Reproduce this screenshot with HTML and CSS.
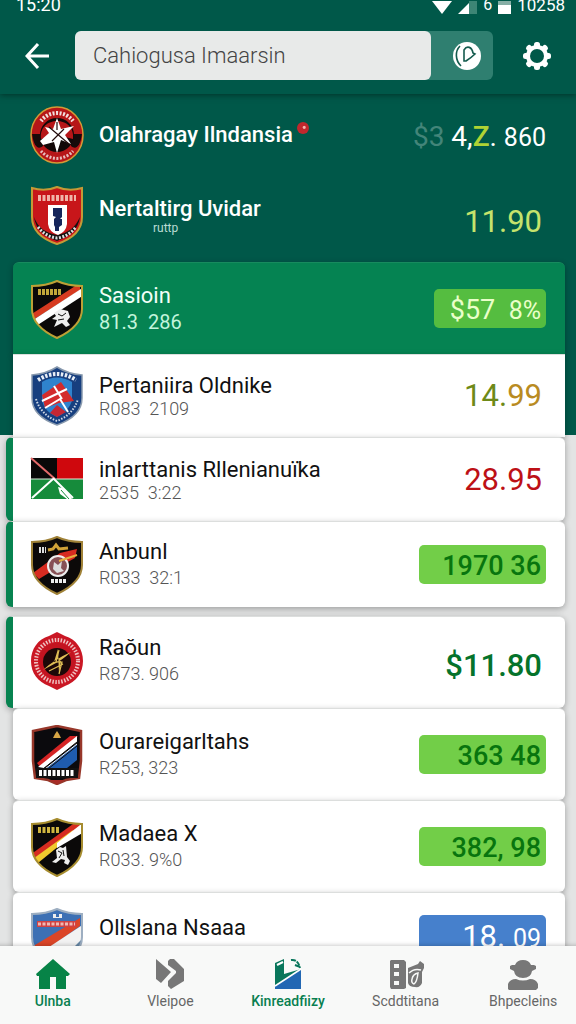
FILE: index.html
```html
<!DOCTYPE html>
<html lang="id">
<head>
<meta charset="utf-8">
<meta name="viewport" content="width=device-width, initial-scale=1">
<title>Olahraga</title>
<link rel="stylesheet" href="styles.css">
</head>
<body>
<div class="app">
  <header class="top">
    <div class="status">
      <span class="clock">15:20</span>
      <span class="status-right">
        <svg width="20" height="13" viewBox="0 0 20 13"><path d="M0 0h20L10 13z" fill="#fff"/></svg>
        <svg width="19" height="13" viewBox="0 0 19 13"><path d="M0 13L11 2v11z" fill="#fff"/><path d="M11 0h8v13h-8z" fill="#3d8575"/></svg>
        <span class="sim">6</span>
        <svg width="13" height="13" viewBox="0 0 13 13"><path d="M0 0h13v13H0z" fill="#fff"/><path d="M0 0h13v4H0z" fill="#86aea5"/></svg>
        <span class="level">10258</span>
      </span>
    </div>
    <div class="bar">
      <button class="icon-btn back" aria-label="Back">
        <svg width="24" height="28" viewBox="0 0 24 28" fill="none" stroke="#fff" stroke-width="3"><path d="M13 2L2 14l11 12M2 14h22"/></svg>
      </button>
      <form class="search">
        <input class="search-input" type="text" aria-label="Search" value="Cahiogusa Imaarsin">
        <button class="search-btn" type="button" aria-label="Go">
          <svg width="30" height="30" viewBox="0 0 30 30"><circle cx="15" cy="15" r="14" fill="#fff"/><path d="M8 5C3 10 3 19 9 25" fill="none" stroke="#145b4e" stroke-width="1.600"/><path d="M12 20V9c3-5 8-3 9 3l2 1c-3 3-6 5-9 7z" fill="none" stroke="#145b4e" stroke-width="1.600"/></svg>
        </button>
      </form>
      <button class="icon-btn gear" aria-label="Settings">
        <svg width="28" height="30" viewBox="0 0 28 30"><g fill="#fff"><circle cx="14" cy="15" r="11"/><rect x="11" y="1" width="6" height="28" rx="2.500"/><rect x="11" y="1" width="6" height="28" rx="2.500" transform="rotate(45 14 15)"/><rect x="11" y="1" width="6" height="28" rx="2.500" transform="rotate(90 14 15)"/><rect x="11" y="1" width="6" height="28" rx="2.500" transform="rotate(135 14 15)"/></g><circle cx="14" cy="15" r="7" fill="#005849"/></svg>
      </button>
    </div>
  </header>

  <main class="content">
    <ul class="intro">
      <li class="row plain">
        <svg class="crest" viewBox="0 0 54 60">
          <ellipse cx="27" cy="30" rx="26" ry="28" fill="#b61618" stroke="#d49a35" stroke-width="1.500"/>
          <path d="M2 29h11v12c-5 4-9 1-11-12zM52 29H41v12c5 4 9 1 11-12z" fill="#160a0a"/>
          <path d="M11 16a20 20 0 0 1 32 0" fill="none" stroke="#f2dede" stroke-width="4" stroke-dasharray="2 1.500"/>
          <path d="M11 46a21 21 0 0 0 32 0" fill="none" stroke="#e7bcbc" stroke-width="3" stroke-dasharray="2 1.500"/>
          <circle cx="27" cy="30" r="17" fill="#120808"/><path d="M11 34c-3-24 35-24 32 0L27 30z" fill="#b61618"/>
          <path d="M27 13l4 11 13-3-9 9 6 9-10-4-4 13-3-11-11 3-3-4 9-8-4-6 8 2z" fill="#fff"/>
          <path d="M19 22l20 17M34 24L22 36M27 17v8" stroke="#230b0b" stroke-width="1.200"/>
        </svg>
        <div class="text"><span class="name">Olahragay Ilndansia<i class="dot"></i></span></div>
        <span class="price total"><span class="faded">$3</span> 4,<b class="lime">Z</b>. <small>860</small></span>
      </li>
      <li class="row plain">
        <svg class="crest" viewBox="0 0 54 60">
          <path d="M2 3q13 4 25-1 12 5 25 1v29c0 14-10 22-25 27C12 54 2 46 2 32z" fill="#c8161a" stroke="#c49a36" stroke-width="2"/>
          <path d="M4 32c2 13 10 19 23 24 13-5 21-11 23-24-5 11-12 16-23 18C16 48 8 43 4 32z" fill="#161111"/>
          <path d="M8 13h38" stroke="#f0b5a9" stroke-width="6" stroke-dasharray="3 1.500"/>
          <path d="M8 42q8 10 19 11 11-1 19-11" fill="none" stroke="#ddd" stroke-width="3" stroke-dasharray="2 1.500"/>
          <path d="M18 20h19v19q-1 8-9 11-9-3-10-11z" fill="#fff"/>
          <path d="M23 23h9v9l-2 2h2v6l-3 2v4h-4v-4l-1-2v-6l2-2-3-1z" fill="#15255b"/>
        </svg>
        <div class="text"><span class="name">Nertaltirg Uvidar</span><span class="tiny">ruttp</span></div>
        <span class="price yellow">11.90</span>
      </li>
    </ul>

    <ul class="card">
      <li class="row active">
        <svg class="crest" viewBox="0 0 54 60">
          <defs><clipPath id="shield"><path d="M2 7q14 0 25-5 11 5 25 5v23c0 13-10 22-25 29C12 52 2 43 2 30z"/></clipPath></defs>
          <g clip-path="url(#shield)"><path d="M0 0h54v60H0z" fill="#0b0909"/><path d="M0 36L50 4v7L0 43z" fill="#d63a20"/><path d="M0 43L54 8v8L3 49z" fill="#fff"/></g>
          <path d="M2 7q14 0 25-5 11 5 25 5v23c0 13-10 22-25 29C12 52 2 43 2 30z" fill="none" stroke="#bda035" stroke-width="2"/>
          <path d="M8 13h23" stroke="#c2a63a" stroke-width="6" stroke-dasharray="3 1"/>
          <path d="M24 34l6-4 8 2 2 6-3 4 3 4-4 2-4-4-8 4 3-7-5-1 4-3z" fill="#eee"/><path d="M28 35l4 2 4-3M28 41l6-1" stroke="#111" fill="none"/>
        </svg>
        <div class="text"><span class="name">Sasioin</span><span class="code">81.3&nbsp; 286</span></div>
        <span class="price pill pale">$57&nbsp; <small>8%</small></span>
      </li>
      <li class="row snug">
        <svg class="crest" viewBox="0 0 54 60">
          <path d="M2 9q14-1 25-8 11 7 25 8v23c0 13-11 22-25 27C13 54 2 45 2 32z" fill="#173f7f" stroke="#8798ad" stroke-width="1.500"/>
          <path d="M12 16q15-9 30 0v19q-4 11-15 16-12-5-15-16z" fill="#2f83cd"/>
          <path d="M12 29l19-13 13 19-15 2-14 5z" fill="#d32b2c"/><path d="M12 35l25-12M24 20l8 13M15 42l15-9 8 13" stroke="#fff" stroke-width="2" fill="none"/><path d="M20 47l7-8 9 7-9 5z" fill="#c52734"/>
          <path d="M8 14q19-12 38 0" stroke="#e8eef6" stroke-width="4" stroke-dasharray="2.500 1.500" fill="none"/>
          <path d="M6 33q5 16 21 22 16-6 21-22" stroke="#d0d9e6" stroke-width="2" stroke-dasharray="1.500 1.500" fill="none"/>
        </svg>
        <div class="text"><span class="name">Pertaniira Oldnike</span><span class="code">R083&nbsp; 2109</span></div>
        <span class="price olive">14.<span class="amber">99</span></span>
      </li>
      <li class="row snug marked">
        <svg class="crest" viewBox="0 0 54 60">
          <path d="M1 8h26v21H1z" fill="#090808"/><path d="M27 8h26v21H27z" fill="#cf080d"/><path d="M1 29h52v20H1z" fill="#168b3b"/>
          <path d="M1 29h52" stroke="#dcecdf"/><path d="M1 8l24 21" stroke="#e46b6b" stroke-width="2"/><path d="M2 48l21-19M23 28l20 20" stroke="#fff" stroke-width="2"/><path d="M28 37l4 1 7 6 3 5h-5l-7-5z" fill="#fff"/><path d="M31 40l8 9" stroke="#168b3b"/>
        </svg>
        <div class="text"><span class="name">inlarttanis Rllenianuïka</span><span class="code">2535&nbsp; 3:22</span></div>
        <span class="price red">28.95</span>
      </li>
      <li class="row marked">
        <svg class="crest" viewBox="0 0 54 60">
          <g clip-path="url(#shield)"><path d="M0 0h54v60H0z" fill="#0c0909"/><path d="M3 38L30 18l17-4-2 9-18 10L9 44z" fill="#d72b21"/></g>
          <path d="M2 7q14 0 25-5 11 5 25 5v23c0 13-10 22-25 29C12 52 2 43 2 30z" fill="none" stroke="#a08237" stroke-width="2"/>
          <circle cx="28" cy="31" r="10" fill="#875055" stroke="#eee" stroke-width="2"/><path d="M24 27l4 3 4-4-1 7 3 3-7 2-4-4z" fill="#ddd"/><path d="M29 26l18-6" stroke="#e6ae3f" stroke-width="2"/>
          <path d="M9 15h7" stroke="#ddd" stroke-width="6" stroke-dasharray="2 1"/><path d="M18 15l5-1 3-4 3 4 9-1" stroke="#d0a138" stroke-width="3" fill="none"/><path d="M21 46h15" stroke="#eee" stroke-width="4" stroke-dasharray="3 1"/>
        </svg>
        <div class="text"><span class="name">Anbunl</span><span class="code">R033&nbsp; 32:1</span></div>
        <span class="price pill wide">1970 36</span>
      </li>
    </ul>

    <ul class="card">
      <li class="row marked lead">
        <svg class="crest" viewBox="0 0 54 60">
          <path d="M27 1l8 4c11 3 18 13 18 25S46 51 35 55l-8 4-8-4C8 51 1 42 1 30S8 8 19 5z" fill="#ca1724"/>
          <circle cx="27" cy="30" r="21" fill="none" stroke="#efc2c2" stroke-width="4" stroke-dasharray="1.500 1.500"/>
          <circle cx="27" cy="30" r="18" fill="#c31420"/><circle cx="27" cy="31" r="14" fill="#1c0808"/>
          <path d="M13 39q12-11 28-18-9 8-15 11zM28 18l-4 13 7-1-2 13" fill="#dfbd55"/><path d="M29 19l-3 12h6l-3 12M19 40l14-7" fill="none" stroke="#dfbd55" stroke-width="1.200"/>
        </svg>
        <div class="text"><span class="name">Raŏun</span><span class="code">R873. 906</span></div>
        <span class="price green">$11.80</span>
      </li>
      <li class="row">
        <svg class="crest" viewBox="0 0 54 60">
          <path d="M3 6l24-5 24 5v30l-2 17-13 2-9 4-9-4-13-2-2-17z" fill="#0b0a0d" stroke="#97372a" stroke-width="2.500"/>
          <path d="M7 38L40 11h8L10 42z" fill="#d42424"/><path d="M8 42L47 11v6L14 43z" fill="#fff"/><path d="M17 43L47 19v16l-10 8z" fill="#1f5cae"/><path d="M13 44L47 17M18 44L47 21" stroke="#111"/><path d="M15 44L47 19" stroke="#fff"/>
          <path d="M23 13l2-4 2-3 2 3 2 4z" fill="#d6a545"/><path d="M6 43h42v10H6z" fill="#111"/><path d="M9 48h36" stroke="#fff" stroke-width="6" stroke-dasharray="3 1.500"/><path d="M19 55h16l-8 4z" fill="#a92c27"/>
        </svg>
        <div class="text"><span class="name">Ourareigarltahs</span><span class="code">R253, 323</span></div>
        <span class="price pill wide">363 48</span>
      </li>
      <li class="row">
        <svg class="crest" viewBox="0 0 54 60">
          <g clip-path="url(#shield)"><path d="M0 0h54v60H0z" fill="#0b0909"/><path d="M0 38L50 2v9L0 44z" fill="#d62c20"/><path d="M0 44L43 13l-3 7L3 50z" fill="#f0c92e"/><path d="M27 26L54 5v10L27 31z" fill="#fff"/></g>
          <path d="M2 7q14 0 25-5 11 5 25 5v23c0 13-10 22-25 29C12 52 2 43 2 30z" fill="none" stroke="#a68c2f" stroke-width="2"/>
          <path d="M8 13h22" stroke="#d0b540" stroke-width="6" stroke-dasharray="3 1.500"/>
          <path d="M26 33l4-3 3 1 3-2 1 11 3 4-2 4-4-2 1-3-4-1-5 4-4-1 5-4z" fill="#eee"/><path d="M28 34l4 2-3 5M33 33l1 6" stroke="#111" fill="none"/>
        </svg>
        <div class="text"><span class="name">Madaea X</span><span class="code">R033. 9%0</span></div>
        <span class="price pill wide">382, 98</span>
      </li>
      <li class="row last">
        <svg class="crest" viewBox="0 0 54 60">
          <g clip-path="url(#shield)"><path d="M0 0h54v60H0z" fill="#3d70b4"/><path d="M0 41L50 11v8L6 50z" fill="#db4528"/><path d="M7 48L54 17v18L20 60z" fill="#f2f2f2"/><path d="M24 60L54 30v30z" fill="#6687a5"/></g>
          <path d="M2 7q14 0 25-5 11 5 25 5v23c0 13-10 22-25 29C12 52 2 43 2 30z" fill="none" stroke="#9daec1" stroke-width="2"/>
          <path d="M7 17h39" stroke="#d14242" stroke-width="6"/><path d="M8 17h37" stroke="#efb9b5" stroke-width="3" stroke-dasharray="3 1.500"/><path d="M23 11v-4h3v3h3v-3h3v4z" fill="#eee"/>
        </svg>
        <div class="text"><span class="name">Ollslana Nsaaa</span></div>
        <span class="price pill wide blue">18. <small>09</small></span>
      </li>
    </ul>
  </main>

  <nav class="tabs">
    <a class="tab on" href="#home">
      <svg width="36" height="32" viewBox="0 0 36 32"><path d="M18 1l17 15-2 2h-2v13H21V19h-6v12H4V18H2l-1-2z" fill="#078347"/></svg>
      <span>Ulnba</span>
    </a>
    <a class="tab" href="#next">
      <svg width="30" height="32" viewBox="0 0 30 32"><path d="M1 1l15 13L6 25l-5-4zM13 3l2-2h4l10 10v12l-13 8-3-3v-5l8-8v-2l-8-6z" fill="#777"/></svg>
      <span>Vleipoe</span>
    </a>
    <a class="tab on" href="#activity">
      <svg width="28" height="32" viewBox="0 0 28 32"><path d="M1 5l9-4v15l17-5v20H1z" fill="#08765b"/><path d="M1 31v-3L27 11v20z" fill="#2267b3"/><path d="M1 28L27 11" stroke="#fff" stroke-width="1.500"/><path d="M3 7l6-3" stroke="#fff" stroke-width="2"/><path d="M17 2q7-1 9 8M21 7l5 2" stroke="#08765b" stroke-width="2" stroke-dasharray="5 1" fill="none"/></svg>
      <span>Kinreadfiizy</span>
    </a>
    <a class="tab" href="#stats">
      <svg width="36" height="32" viewBox="0 0 36 32"><path d="M3 2h13l2 2v26l-2 1H3l-1-2V3z" fill="#777"/><path d="M6 6h5v4H6zM6 14h5v4H6zM6 23h5v4H6z" fill="#f8f9f8"/><path d="M20 10l10-4 2-3 4 3v4l-2 4v11q-2 5-7 4-6 0-7-4z" fill="#777"/><path d="M21 15q5-5 12-3M24 21q1-5 6-6-1 9-4 11-3-1-2-5z" stroke="#f8f9f8" stroke-width="1.500" fill="none"/></svg>
      <span>Scddtitana</span>
    </a>
    <a class="tab" href="#profile">
      <svg width="32" height="32" viewBox="0 0 32 32"><path d="M3 8l2-1h3q2-5 8-5t8 5h3l2 1v3l-4 2q-1 7-9 7t-9-7l-4-2zM1 31v-5q2-5 8-5 7 3 14 0 6 0 8 5v4l-2 2H2z" fill="#777"/></svg>
      <span>Bhpecleins</span>
    </a>
  </nav>
</div>
</body>
</html>
```
FILE: styles.css
```css
* { box-sizing: border-box; }
body { margin: 0; font-family: Roboto, "Liberation Sans", sans-serif; color: #111; }
ul { list-style: none; margin: 0; padding: 0; }
button { border: 0; padding: 0; background: none; }
svg { display: block; flex: none; }

.app { display: flex; flex-direction: column; height: 100vh; overflow: hidden; }

.top { flex: none; padding-bottom: 14px; background: #005849; box-shadow: 0 1px 6px rgba(0, 40, 32, .8); position: relative; color: #fff; }
.status { display: flex; justify-content: space-between; align-items: flex-end; height: 14px; padding: 0 11px 0 16px; overflow: hidden; font-size: 18px; line-height: 18px; }
.status-right { display: flex; align-items: flex-end; gap: 6px; height: 14px; }
.sim { font-size: 16px; }
.level { font-size: 17px; }
.bar { display: flex; align-items: center; padding: 17px 25px 0 25px; }
.back { width: 24px; margin-right: 26px; }
.search { display: flex; flex: 1; min-width: 0; height: 49px; border-radius: 6px; background: #2f7f70; }
.search-input { flex: 1; min-width: 0; border: 0; border-radius: 6px; padding: 0 18px; background: #e8eae9; color: #444; font: 300 22px Roboto, "Liberation Sans", sans-serif; }
.search-btn { display: flex; align-items: center; justify-content: center; width: 62px; padding-left: 10px; }
.gear { margin-left: 30px; }

.content { flex: 1; min-height: 0; overflow: hidden; padding: 1px 11px 0 13px; background: linear-gradient(#005849 341px, #e3e4e4 341px); }
.intro { padding-bottom: 7px; }
.row { display: flex; align-items: center; gap: 15px; padding: 0 19px 0 17px; }
.plain { height: 80px; color: #fff; }
.plain .name { font-weight: 500; }
.card { margin-bottom: 9px; }
.card .row { min-height: 92px; border-top: 1px solid #dcdedd; border-radius: 6px; background: #fff; box-shadow: 0 2px 6px rgba(0, 0, 0, .3); position: relative; }
.card .row + .row { min-height: 84px; }
.card .row + .row:last-child { min-height: 86px; }
.card + .card .row + .row { min-height: 92px; }
.card .active { background: #058352; border-color: #178b5e; border-radius: 6px 6px 0 0; color: #f2fff8; }
.card .active + .row { min-height: 83px; border-radius: 0; }
.card .marked { margin-left: -7px; border-left: 7px solid #078350; }
.card .lead { padding-bottom: 4px; }
.card .last { align-items: flex-start; padding-top: 14px; }
.last .name { padding-top: 8px; }
.last .pill { margin-top: 8px; }
.crest { width: 54px; height: 60px; }
.text { display: flex; flex-direction: column; flex: 1; min-width: 0; }
.name { font-size: 22px; line-height: 26px; white-space: nowrap; }
.code { font-size: 18px; line-height: 26px; font-weight: 300; color: #555; white-space: nowrap; }
.snug .code { line-height: 20px; }
.active .code { font-size: 20px; color: #c3f5dc; font-weight: 400; }
.tiny { margin-left: 54px; font-size: 12px; line-height: 12px; color: #b9dcd3; }
.dot { display: inline-block; width: 12px; height: 12px; margin-left: 4px; border-radius: 50%; background: radial-gradient(circle at 60% 45%, #f7b5b0 1px, #c1272d 2px); vertical-align: 8px; }

.price { flex: none; padding-right: 4px; font-size: 31px; line-height: 38px; text-align: right; white-space: nowrap; }
.price small { font-size: 25px; }
.total { padding: 4px 0 0; font-size: 28px; }
.faded { color: #438579; }
.lime { color: #b0d334; font-weight: 500; }
.yellow { padding-top: 14px; color: #c5e36c; }
.olive { color: #6e8a18; }
.amber { color: #b98b22; }
.red { color: #bd1016; }
.green { padding-top: 10px; color: #05732b; font-weight: 500; }
.pill { border-radius: 5px; padding: 4px 5px 0 11px; background: #72ce48; color: #08750e; font-size: 27px; line-height: 35px; font-weight: 500; }
.pale { min-width: 112px; background: #55bd40; color: #eaffc9; font-weight: 400; }
.wide { min-width: 127px; }
.blue { background: #4680cc; color: #fff; font-size: 31px; font-weight: 400; }

.tabs { flex: none; display: grid; grid-template-columns: repeat(5, 1fr); height: 78px; padding-top: 12px; margin: 0 -6px; background: #f8f9f8; box-shadow: 0 -1px 4px rgba(0, 0, 0, .2); position: relative; }
.tab { display: flex; flex-direction: column; align-items: center; gap: 2px; color: #666; font-size: 14px; line-height: 18px; text-decoration: none; }
.tab.on { color: #087f50; font-weight: 500; }
```
